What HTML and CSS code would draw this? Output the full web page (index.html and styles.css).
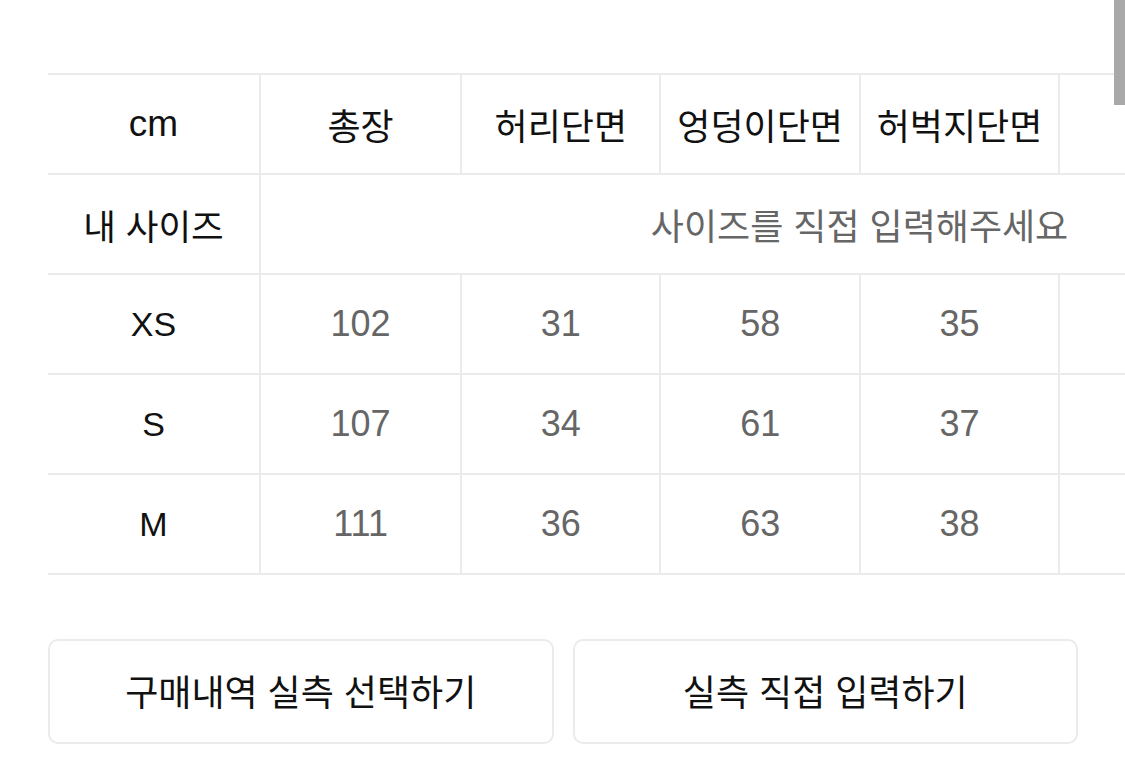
FILE: index.html
```html
<!DOCTYPE html>
<html lang="ko">
<head>
<meta charset="utf-8">
<title>사이즈</title>
<link rel="stylesheet" href="styles.css">
</head>
<body>
<div class="page">
  <div class="table-wrap">
    <table class="size-table">
      <colgroup>
        <col class="c-label">
        <col class="c-a"><col class="c-b"><col class="c-b"><col class="c-b"><col class="c-b"><col class="c-b">
      </colgroup>
      <thead>
        <tr>
          <th class="label unit">cm</th>
          <th>총장</th>
          <th>허리단면</th>
          <th>엉덩이단면</th>
          <th>허벅지단면</th>
          <th>밑위</th>
          <th>밑단단면</th>
        </tr>
      </thead>
      <tbody>
        <tr>
          <th class="label ko">내 사이즈</th>
          <td colspan="6" class="placeholder">사이즈를 직접 입력해주세요</td>
        </tr>
        <tr>
          <th class="label">XS</th>
          <td>102</td><td>31</td><td>58</td><td>35</td><td>28</td><td>22</td>
        </tr>
        <tr>
          <th class="label">S</th>
          <td>107</td><td>34</td><td>61</td><td>37</td><td>29</td><td>23</td>
        </tr>
        <tr>
          <th class="label">M</th>
          <td>111</td><td>36</td><td>63</td><td>38</td><td>30</td><td>24</td>
        </tr>
      </tbody>
    </table>
  </div>
  <div class="actions">
    <button class="btn">구매내역 실측 선택하기</button>
    <button class="btn">실측 직접 입력하기</button>
  </div>
</div>
<div class="scroll-thumb"></div>
</body>
</html>
```
FILE: styles.css
```css
html, body {
  margin: 0;
  padding: 0;
  background: #fff;
}
body {
  font-family: "Liberation Sans", "Noto Sans CJK KR", sans-serif;
  color: #111;
  overflow: hidden;
}
.page {
  padding-top: 73px;
}
.table-wrap {
  padding-left: 48px;
  overflow: hidden;
}
.size-table {
  border-collapse: collapse;
  table-layout: fixed;
  width: 1410px;
}
.c-label { width: 212px; }
.c-a { width: 201px; }
.c-b { width: 199.3px; }
.size-table th,
.size-table td {
  height: 98px;
  padding: 0;
  border-top: 2px solid #ebebeb;
  border-bottom: 2px solid #ebebeb;
  border-left: 2px solid #ebebeb;
  text-align: center;
  vertical-align: middle;
  font-size: 34px;
  font-weight: normal;
  white-space: nowrap;
}
.size-table .label {
  border-left: none;
  color: #111;
}
.size-table thead th {
  color: #111;
  font-size: 36px;
}
.size-table thead th.unit {
  font-size: 37px;
}
.size-table th.ko {
  font-size: 35.5px;
}
.size-table td {
  color: #666;
  font-size: 36px;
}
.size-table td.placeholder {
  font-size: 36px;
  color: #666;
}
.actions {
  display: flex;
  gap: 19px;
  padding: 64px 47px 0 48px;
}
.btn {
  flex: 1;
  height: 105px;
  background: #fff;
  border: 2px solid #ebebeb;
  border-radius: 10px;
  font-family: "Liberation Sans", "Noto Sans CJK KR", sans-serif;
  font-size: 36px;
  color: #111;
  padding: 0 0 4px;
}
.scroll-thumb {
  position: absolute;
  top: 0;
  right: 0;
  width: 11px;
  height: 105px;
  background: #a9a9a9;
}
```
